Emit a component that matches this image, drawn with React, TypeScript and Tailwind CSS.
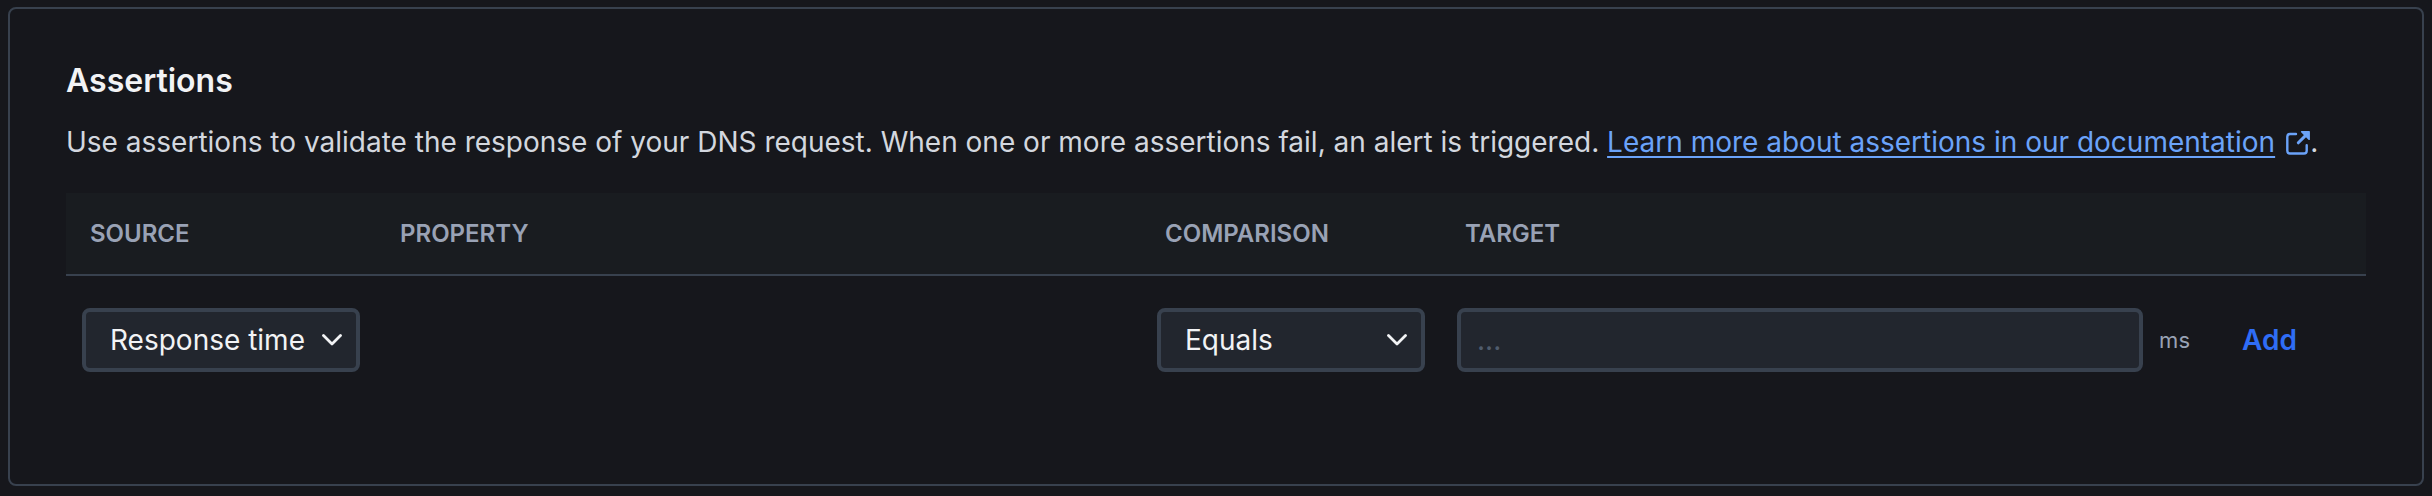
import { useState } from 'react';

function Chevron() {
  return (
    <svg
      aria-hidden="true"
      viewBox="0 0 20 12"
      className="pointer-events-none col-start-1 row-start-1 mr-[18px] h-3 w-5 justify-self-end"
      fill="none"
      stroke="#f2f3f5"
      strokeWidth="2.8"
      strokeLinecap="round"
      strokeLinejoin="round"
    >
      <path d="M1.5 1.5 10 10l8.5-8.5" />
    </svg>
  );
}

function SelectBox({ label, options }: { label: string; options: string[] }) {
  const [value, setValue] = useState(options[0]);
  return (
    <div className="grid items-center">
      <select
        aria-label={label}
        value={value}
        onChange={(event) => setValue(event.target.value)}
        className="col-start-1 row-start-1 h-16 w-full appearance-none rounded-lg border-4 border-[#38414e] bg-[#22262e] pr-11 pl-6 text-[28px] text-[#f2f3f5]"
      >
        {options.map((option) => (
          <option key={option}>{option}</option>
        ))}
      </select>
      <Chevron />
    </div>
  );
}

function ExternalLinkIcon() {
  return (
    <svg aria-hidden="true" viewBox="0 0 24 24" className="ml-[11px] inline-block size-6 align-[-3px]" fill="none" stroke="#6ba3f9" strokeWidth="2.4" strokeLinecap="round" strokeLinejoin="round">
      <path d="M10 3H4Q1.300 3 1.300 5.700V19.800Q1.300 22.500 4 22.500H18Q20.700 22.500 20.700 19.800V14.300" />
      <path d="M12.300 11.800 19.500 4.600" strokeWidth="3" />
      <path d="M15.600 .8H23.200V8.400Z" fill="#6ba3f9" strokeWidth="1.400" />
    </svg>
  );
}

export default function App() {
  const [target, setTarget] = useState('');
  const heading = 'px-6 text-left font-semibold';

  return (
    <main className="min-h-screen bg-[#16171c] px-2 pt-[7px] pb-2 font-['Inter','Liberation_Sans',sans-serif]">
      <section className="rounded-lg border-2 border-[#38414e] px-14 pt-12 pb-24">
        <h2 className="text-[32px] leading-12 font-semibold text-[#f2f3f5]">Assertions</h2>
        <p className="mt-[13px] text-[28px] leading-12 text-[#d3d7df]">
          Use assertions to validate the response of your DNS request. When one or more assertions fail, an alert is triggered.{' '}
          <a href="#documentation" className="text-[#6ba3f9]">
            <span className="underline decoration-2 underline-offset-4 [text-decoration-skip-ink:none]">Learn more about assertions in our documentation</span>
            <ExternalLinkIcon />
          </a>
          .
        </p>
        <table className="mt-[27px] w-full table-fixed border-collapse">
          <colgroup>
            <col className="w-[310px]" />
            <col />
            <col className="w-[300px]" />
            <col className="w-[765px]" />
            <col className="w-[160px]" />
          </colgroup>
          <thead>
            <tr className="h-[82px] border-b-2 border-[#38414e] bg-[#191c20] text-2xl text-[#99a2b5]">
              <th scope="col" className={heading}>SOURCE</th>
              <th scope="col" className={heading}>PROPERTY</th>
              <th scope="col" className={heading}>COMPARISON</th>
              <th scope="col" className={heading} colSpan={2}>TARGET</th>
            </tr>
          </thead>
          <tbody>
            <tr>
              <td className="px-4 pt-8 pb-4">
                <SelectBox label="Source" options={['Response time', 'Response code', 'Text answer', 'JSON answer']} />
              </td>
              <td />
              <td className="px-4 pt-8 pb-4">
                <SelectBox label="Comparison" options={['Equals', 'Not equals', 'Less than', 'Greater than']} />
              </td>
              <td className="px-4 pt-8 pb-4">
                <label className="flex items-center gap-4 text-[22px] text-[#99a2b5]">
                  <input
                    type="text"
                    aria-label="Target in milliseconds"
                    placeholder="..."
                    value={target}
                    onChange={(event) => setTarget(event.target.value)}
                    className="h-16 min-w-0 flex-1 rounded-lg border-4 border-[#38414e] bg-[#22262e] px-4 text-[28px] text-[#f2f3f5] placeholder:text-[#505c6d]"
                  />
                  ms
                </label>
              </td>
              <td className="px-9 pt-8 pb-4">
                <button type="button" className="text-[28px] font-semibold text-[#2f6df6]">Add</button>
              </td>
            </tr>
          </tbody>
        </table>
      </section>
    </main>
  );
}
